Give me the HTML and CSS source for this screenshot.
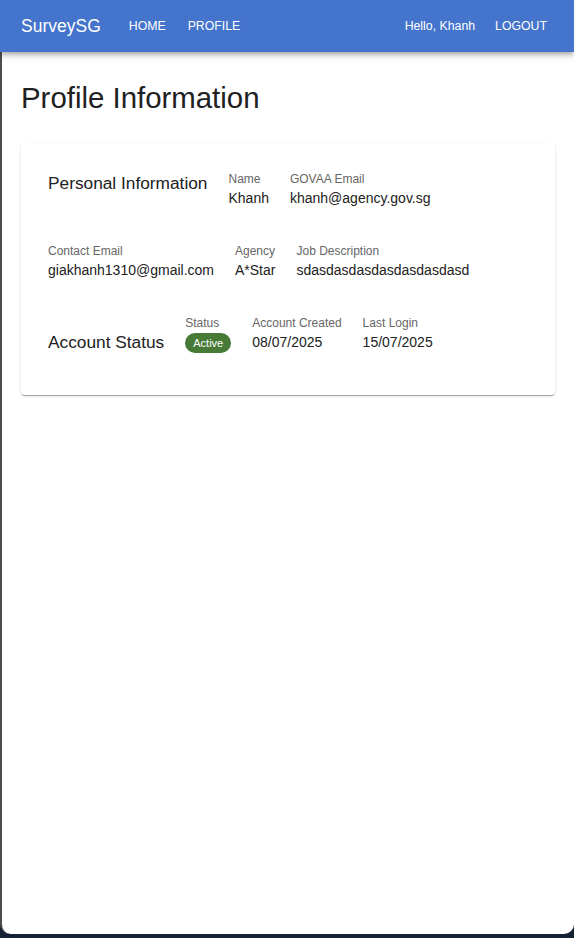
FILE: index.html
```html
<!DOCTYPE html>
<html lang="en">
<head>
<meta charset="utf-8">
<title>SurveySG - Profile</title>
<link rel="stylesheet" href="styles.css">
</head>
<body>
<header class="appbar">
  <div class="brand">SurveySG</div>
  <nav class="nav">
    <a class="nav-btn" href="#">HOME</a>
    <a class="nav-btn" href="#">PROFILE</a>
  </nav>
  <div class="spacer"></div>
  <span class="greeting">Hello, Khanh</span>
  <a class="nav-btn logout" href="#">LOGOUT</a>
</header>
<main class="window">
  <h1 class="page-title">Profile Information</h1>
  <section class="card">
    <div class="section personal">
      <h2 class="section-title">Personal Information</h2>
      <div class="field"><div class="label">Name</div><div class="value">Khanh</div></div>
      <div class="field"><div class="label">GOVAA Email</div><div class="value">khanh@agency.gov.sg</div></div>
      <div class="field"><div class="label">Contact Email</div><div class="value">giakhanh1310@gmail.com</div></div>
      <div class="field"><div class="label">Agency</div><div class="value">A*Star</div></div>
      <div class="field"><div class="label">Job Description</div><div class="value">sdasdasdasdasdasdasdasd</div></div>
    </div>
    <div class="section account">
      <h2 class="section-title account-title">Account Status</h2>
      <div class="field"><div class="label">Status</div><div class="value"><span class="chip">Active</span></div></div>
      <div class="field"><div class="label">Account Created</div><div class="value">08/07/2025</div></div>
      <div class="field"><div class="label">Last Login</div><div class="value">15/07/2025</div></div>
    </div>
  </section>
</main>
</body>
</html>
```
FILE: styles.css
```css
html {
  background: #142033;
}
body {
  margin: 0;
  font-family: "Liberation Sans", Arial, Helvetica, sans-serif;
  color: #212121;
}
.appbar {
  position: relative;
  z-index: 2;
  height: 52px;
  background: #4474cc;
  color: #fff;
  display: flex;
  align-items: center;
  padding: 0 27px 0 21px;
  box-shadow: 0 2px 4px -1px rgba(0,0,0,0.2), 0 4px 5px 0 rgba(0,0,0,0.14), 0 1px 10px 0 rgba(0,0,0,0.12);
}
.brand {
  font-size: 17.5px;
  margin-right: 28px;
}
.nav {
  display: flex;
  gap: 22px;
}
.nav-btn {
  color: #fff;
  text-decoration: none;
  font-size: 12.3px;
}
.spacer {
  flex: 1;
}
.greeting {
  font-size: 12.3px;
  margin-right: 20px;
}
.window {
  height: 882px;
  box-sizing: border-box;
  background: #fff;
  border-left: 2px solid #4d4d4d;
  border-bottom-left-radius: 10px;
  border-bottom-right-radius: 10px;
  padding: 28px 19px 0 19px;
}
.page-title {
  margin: 0 0 27px 0;
  font-size: 29.4px;
  font-weight: 400;
  line-height: 36px;
  color: #212121;
}
.card {
  background: #fff;
  border-radius: 4px;
  box-shadow: 0 2px 1px -1px rgba(0,0,0,0.2), 0 1px 1px 0 rgba(0,0,0,0.14), 0 1px 3px 0 rgba(0,0,0,0.12);
  padding: 27px 27px 40px 27px;
}
.section {
  display: flex;
  flex-wrap: wrap;
  align-items: flex-start;
  column-gap: 21px;
  row-gap: 34px;
}
.account {
  margin-top: 34px;
}
.section-title {
  margin: 0;
  font-size: 17.3px;
  font-weight: 400;
  line-height: 26px;
  color: #212121;
}
.account-title {
  margin-top: 14.5px;
}
.field {
  display: flex;
  flex-direction: column;
}
.label {
  font-size: 12px;
  line-height: 18px;
  color: #666;
}
.value {
  font-size: 14px;
  line-height: 20px;
  color: #212121;
}
.chip {
  display: inline-flex;
  align-items: center;
  justify-content: center;
  height: 20px;
  padding: 0 8px;
  border-radius: 10px;
  background: #477a37;
  color: #fff;
  font-size: 11px;
  margin-top: 1px;
}
```
